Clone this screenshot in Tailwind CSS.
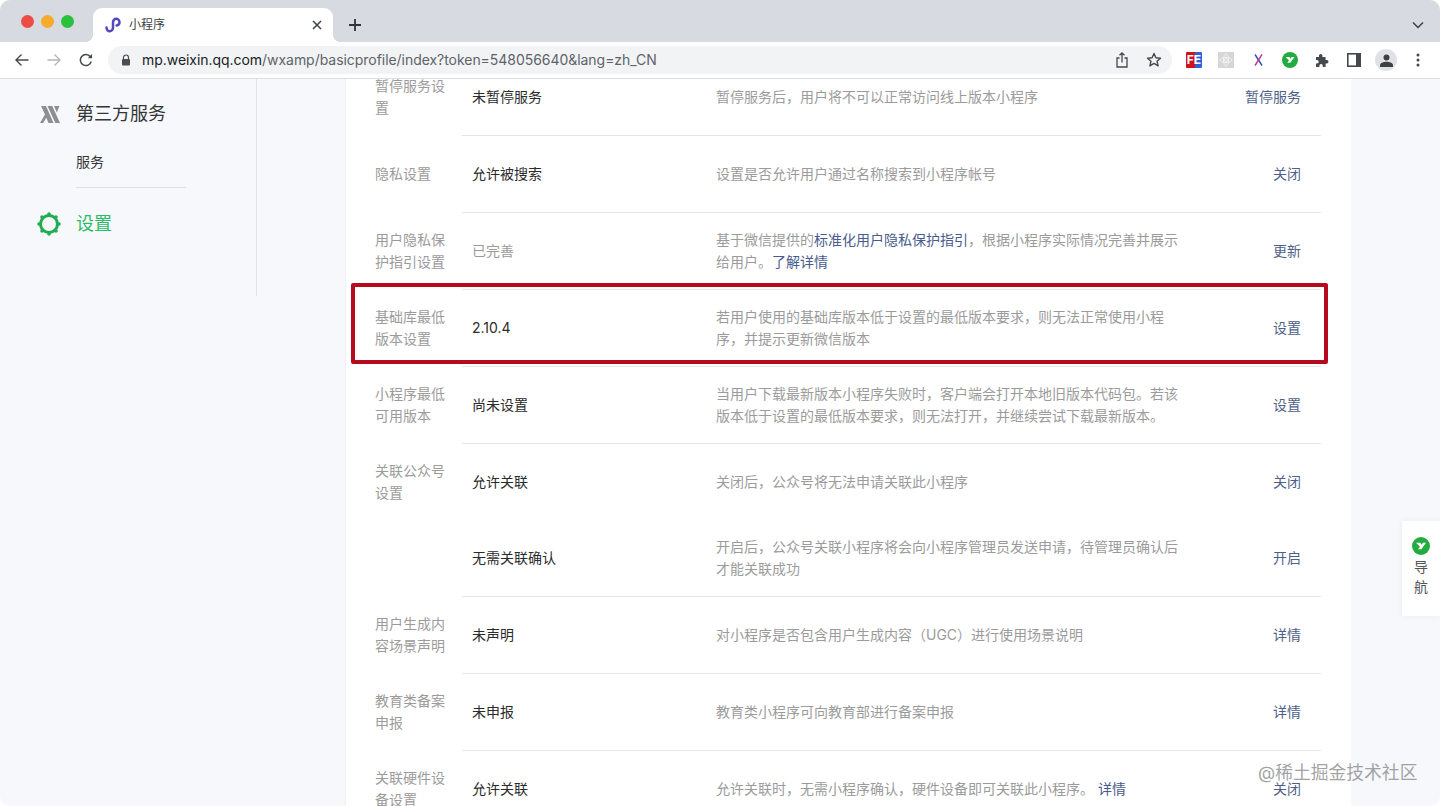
<!DOCTYPE html>
<html lang="zh-CN">
<head>
<meta charset="utf-8">
<title>小程序</title>
<script src="https://cdn.jsdelivr.net/npm/@tailwindcss/browser@4"></script>
</head>
<body class="bg-white">
<div class="relative w-[1440px] h-[806px] overflow-hidden rounded-[10px] flex flex-col bg-[#f6f8fc] font-['Inter','Noto_Sans_CJK_SC',sans-serif]">

  <!-- tab strip -->
  <div class="h-[42px] shrink-0 flex bg-[#d7dae0]">
    <div class="w-[93px] flex items-center gap-[7px] pl-[21px]">
      <span class="w-[13px] h-[13px] rounded-full bg-[#ee4c47]"></span>
      <span class="w-[13px] h-[13px] rounded-full bg-[#f6ab2c]"></span>
      <span class="w-[13px] h-[13px] rounded-full bg-[#2ac13f]"></span>
    </div>
    <div class="relative mt-2 w-[240px] h-[34px] bg-white rounded-t-[9px] flex items-center pl-[12px] pr-[11px]">
      <span class="absolute -left-2 bottom-0 w-2 h-2 bg-[radial-gradient(circle_at_0_0,transparent_8px,white_8px)]"></span>
      <span class="absolute -right-2 bottom-0 w-2 h-2 bg-[radial-gradient(circle_at_100%_0,transparent_8px,white_8px)]"></span>
      <svg class="w-4 h-4 shrink-0" viewBox="0 0 16 16" fill="none" stroke="#5547bd" stroke-width="2.500" stroke-linecap="round"><path d="M1.500 10.500c0 2 1.400 3.800 3.200 3.800S8 12.600 8 10.700V5.300C8 3.400 9.400 1.800 11.200 1.800S14.500 3.400 14.500 5.200c0 1.800-1.300 3-2.900 3.200"/></svg>
      <span class="ml-[8px] text-[12px] text-[#3c4043]">小程序</span>
      <svg class="ml-auto w-[10px] h-[10px]" viewBox="0 0 10 10" stroke="#3c4043" stroke-width="1.500"><path d="M1 1l8 8M9 1l-8 8"/></svg>
    </div>
    <div class="ml-[6px] w-8 flex items-center justify-center pt-[8px]">
      <svg class="w-[14px] h-[14px]" viewBox="0 0 14 14" stroke="#2f3237" stroke-width="1.800"><path d="M7 1v12M1 7h12"/></svg>
    </div>
    <div class="flex-1"></div>
    <div class="w-8 mr-[6px] flex items-center justify-center pt-[8px]">
      <svg class="w-[12px] h-[8px]" viewBox="0 0 12 8" fill="none" stroke="#3c4043" stroke-width="1.500"><path d="M1 1.500l5 5 5-5"/></svg>
    </div>
  </div>

  <!-- toolbar -->
  <div class="h-[37px] shrink-0 bg-white border-b border-[#dcdee2] flex items-center pl-[6px] pr-[6px]">
    <div class="w-8 flex justify-center">
      <svg class="w-[14px] h-[14px]" viewBox="0 0 14 14" fill="none" stroke="#45484d" stroke-width="1.400"><path d="M13.500 7H1M6.500 1.500L1 7l5.500 5.500"/></svg>
    </div>
    <div class="w-8 flex justify-center">
      <svg class="w-[14px] h-[14px]" viewBox="0 0 14 14" fill="none" stroke="#b3b6ba" stroke-width="1.400"><path d="M.5 7H13M7.500 1.500L13 7l-5.500 5.500"/></svg>
    </div>
    <div class="w-8 flex justify-center">
      <svg class="w-[14px] h-[14px]" viewBox="0 0 14 14" fill="none" stroke="#45484d" stroke-width="1.500"><path d="M12.200 8.500a5.500 5.500 0 1 1-.9-4.700"/><path d="M13 1v4.200H8.800z" fill="#45484d" stroke="none"/></svg>
    </div>
    <div class="ml-[6px] w-[1064px] h-[28px] rounded-full bg-[#f1f3f5] flex items-center pl-[13px] pr-[8px]">
      <svg class="w-[10px] h-[12px] shrink-0" viewBox="0 0 10 12"><path d="M2.500 5V3.500a2.500 2.500 0 0 1 5 0V5" fill="none" stroke="#4a4d52" stroke-width="1.200"/><rect x="1" y="5" width="8" height="6.500" rx="1" fill="#4a4d52"/></svg>
      <span class="ml-[11px] text-[14px] tracking-[-0.045px] text-[#5f6368] whitespace-nowrap leading-none"><span class="text-[#202124]">mp.weixin.qq.com</span>/wxamp/basicprofile/index?token=548056640&amp;lang=zh_CN</span>
      <svg class="ml-auto w-[14px] h-[16px]" viewBox="0 0 14 16" fill="none" stroke="#45484d" stroke-width="1.300"><path d="M4.500 6H2v9h10V6H9.500M7 10.500V1M4.500 3.200L7 .9l2.500 2.300"/></svg>
      <svg class="ml-[17px] mr-[2px] w-[16px] h-[16px]" viewBox="0 0 16 16" fill="none" stroke="#45484d" stroke-width="1.400" stroke-linejoin="round"><path d="M8 1.500l1.900 4.300 4.600.4-3.500 3 1.100 4.600L8 11.400l-4.100 2.400L5 9.200l-3.500-3 4.600-.4z"/></svg>
    </div>
    <div class="ml-[6px] w-8 flex justify-center">
      <div class="w-4 h-4 flex items-center justify-center rounded-[1px] bg-[linear-gradient(90deg,#d0121b_55%,#2d63d8_55%)] text-white text-[12px] font-bold leading-none">FE</div>
    </div>
    <div class="w-8 flex justify-center">
      <svg class="w-4 h-4" viewBox="0 0 16 16"><rect width="16" height="16" fill="#d6d6d6"/><g fill="none" stroke="#f2f2f2" stroke-width="1"><ellipse cx="8" cy="8" rx="6" ry="2.500"/><ellipse cx="8" cy="8" rx="2.500" ry="6"/><circle cx="8" cy="8" r="1.500"/></g></svg>
    </div>
    <div class="w-8 flex justify-center">
      <svg class="w-[9px] h-[12px]" viewBox="0 0 9 12" fill="none" stroke-width="1.400"><path d="M1 .5L8 11.500" stroke="#2f4fb5"/><path d="M8 .5L1 11.500" stroke="#c23a8c"/></svg>
    </div>
    <div class="w-8 flex justify-center">
      <svg class="w-4 h-4" viewBox="0 0 16 16"><circle cx="8" cy="8" r="8" fill="#22ab3f"/><path d="M3.600 5h3.800l1.200 1.800L9.700 5h2.800L8.300 10.800H5.200l1.900-2.200z" fill="#fff"/></svg>
    </div>
    <div class="w-8 flex justify-center">
      <svg class="w-[14px] h-[14px]" viewBox="0 0 14 14"><path d="M1 4h3V2.600a1.700 1.700 0 0 1 3.400 0V4h3.200v3h1.200a1.700 1.700 0 0 1 0 3.400h-1.200V14H7.800v-1.200a1.700 1.700 0 0 0-3.400 0V14H1v-3.600h1a1.700 1.700 0 0 0 0-3.400H1z" fill="#45484d"/></svg>
    </div>
    <div class="w-8 flex justify-center">
      <svg class="w-[14px] h-[14px]" viewBox="0 0 14 14"><rect x=".8" y=".8" width="12.400" height="12.400" fill="#fff" stroke="#45484d" stroke-width="1.600"/><rect x="9" y="1" width="4" height="12" fill="#45484d"/></svg>
    </div>
    <div class="w-8 flex justify-center">
      <div class="w-[22px] h-[22px] rounded-full bg-[#dfe1e6] flex items-center justify-center">
        <svg class="w-[13px] h-[13px]" viewBox="0 0 13 13" fill="#3c4043"><circle cx="6.500" cy="3.500" r="3"/><path d="M0 13v-1.800C0 9 3.500 7.800 6.500 7.800S13 9 13 11.200V13z"/></svg>
      </div>
    </div>
    <div class="w-8 flex justify-center">
      <svg class="w-[4px] h-[14px]" viewBox="0 0 4 14" fill="#45484d"><circle cx="2" cy="2" r="1.500"/><circle cx="2" cy="7" r="1.500"/><circle cx="2" cy="12" r="1.500"/></svg>
    </div>
  </div>

  <!-- page -->
  <div class="flex-1 min-h-0 flex items-start overflow-hidden">
    <aside class="w-[257px] h-[217px] shrink-0 border-r border-[#e0e3e9] pt-[24px]">
      <div class="flex items-center h-[22px]">
        <svg class="ml-[40px] w-[20px] h-[17px]" viewBox="0 0 20 17" fill="#8f8f8f"><path d="M0 17L5 8.500 1 0h5l7.500 17H8.500L6.300 11.800 3.200 17zM7.500 0h4.800l7.700 17h-4.700zM14 0h5.500l-2.700 6.500z"/></svg>
        <span class="ml-[16px] text-[18px] text-[#353535] leading-none">第三方服务</span>
      </div>
      <div class="ml-[76px] mt-[26px] w-[110px] h-[37px] border-b border-[#dde0e5] text-[14px] leading-[22px] text-[#353535]">服务</div>
      <div class="flex items-center mt-[23px] h-[26px]">
        <svg class="ml-[37px] w-[24px] h-[24px]" viewBox="0 0 24 24" fill="none" stroke="#22ac52"><circle cx="12" cy="12" r="8.500" stroke-width="3"/><g fill="#22ac52" stroke="none"><circle cx="12" cy="2" r="1.800"/><circle cx="12" cy="22" r="1.800"/><circle cx="2" cy="12" r="1.800"/><circle cx="22" cy="12" r="1.800"/><circle cx="5" cy="5" r="1.800"/><circle cx="19" cy="5" r="1.800"/><circle cx="5" cy="19" r="1.800"/><circle cx="19" cy="19" r="1.800"/></g></svg>
        <span class="ml-[15px] text-[18px] text-[#2dbb67] leading-none">设置</span>
      </div>
    </aside>

    <main class="ml-[88px] w-[1006px] -mt-[20px] bg-white border-l border-[#eef0f5] pl-[29px] pr-[30px] text-[14px] leading-[22px]">
      <div class="flex h-[77px]">
        <div class="w-[87px] pr-[15px] pb-[2px] self-center text-[#9b9b9b]">暂停服务设置</div>
        <div class="flex-1 flex items-center border-b border-[#e6e6e6]">
          <div class="w-[254px] pl-[10px] text-[#2b2b2b]">未暂停服务</div>
          <div class="w-[462px] text-[#9b9b9b]">暂停服务后，用户将不可以正常访问线上版本小程序</div>
          <div class="flex-1 pr-[20px] text-right text-[#4f5f88]">暂停服务</div>
        </div>
      </div>
      <div class="flex h-[77px]">
        <div class="w-[87px] pr-[15px] pb-[2px] self-center text-[#9b9b9b]">隐私设置</div>
        <div class="flex-1 flex items-center border-b border-[#e6e6e6]">
          <div class="w-[254px] pl-[10px] text-[#2b2b2b]">允许被搜索</div>
          <div class="w-[462px] text-[#9b9b9b]">设置是否允许用户通过名称搜索到小程序帐号</div>
          <div class="flex-1 pr-[20px] text-right text-[#4f5f88]">关闭</div>
        </div>
      </div>
      <div class="flex h-[77px]">
        <div class="w-[87px] pr-[15px] pb-[2px] self-center text-[#9b9b9b]">用户隐私保护指引设置</div>
        <div class="flex-1 flex items-center border-b border-[#e6e6e6]">
          <div class="w-[254px] pl-[10px] text-[#9b9b9b]">已完善</div>
          <div class="w-[462px] text-[#9b9b9b]">基于微信提供的<span class="text-[#4a5a8c]">标准化用户隐私保护指引</span>，根据小程序实际情况完善并展示给用户。<span class="text-[#4a5a8c]">了解详情</span></div>
          <div class="flex-1 pr-[20px] text-right text-[#4f5f88]">更新</div>
        </div>
      </div>
      <div class="flex h-[77px]">
        <div class="w-[87px] pr-[15px] pb-[2px] self-center text-[#9b9b9b]">基础库最低版本设置</div>
        <div class="flex-1 flex items-center border-b border-[#e6e6e6]">
          <div class="w-[254px] pl-[10px] text-[#2b2b2b]">2.10.4</div>
          <div class="w-[462px] text-[#9b9b9b]">若用户使用的基础库版本低于设置的最低版本要求，则无法正常使用小程序，并提示更新微信版本</div>
          <div class="flex-1 pr-[20px] text-right text-[#4f5f88]">设置</div>
        </div>
      </div>
      <div class="flex h-[77px]">
        <div class="w-[87px] pr-[15px] pb-[2px] self-center text-[#9b9b9b]">小程序最低可用版本</div>
        <div class="flex-1 flex items-center border-b border-[#e6e6e6]">
          <div class="w-[254px] pl-[10px] text-[#2b2b2b]">尚未设置</div>
          <div class="w-[462px] text-[#9b9b9b]">当用户下载最新版本小程序失败时，客户端会打开本地旧版本代码包。若该版本低于设置的最低版本要求，则无法打开，并继续尝试下载最新版本。</div>
          <div class="flex-1 pr-[20px] text-right text-[#4f5f88]">设置</div>
        </div>
      </div>
      <div class="flex h-[76px]">
        <div class="w-[87px] pr-[15px] self-center text-[#9b9b9b]">关联公众号设置</div>
        <div class="flex-1 flex items-center">
          <div class="w-[254px] pl-[10px] text-[#2b2b2b]">允许关联</div>
          <div class="w-[462px] text-[#9b9b9b]">关闭后，公众号将无法申请关联此小程序</div>
          <div class="flex-1 pr-[20px] text-right text-[#4f5f88]">关闭</div>
        </div>
      </div>
      <div class="flex h-[77px]">
        <div class="w-[87px]"></div>
        <div class="flex-1 flex items-center border-b border-[#e6e6e6]">
          <div class="w-[254px] pl-[10px] text-[#2b2b2b]">无需关联确认</div>
          <div class="w-[462px] text-[#9b9b9b]">开启后，公众号关联小程序将会向小程序管理员发送申请，待管理员确认后才能关联成功</div>
          <div class="flex-1 pr-[20px] text-right text-[#4f5f88]">开启</div>
        </div>
      </div>
      <div class="flex h-[77px]">
        <div class="w-[87px] pr-[15px] pb-[2px] self-center text-[#9b9b9b]">用户生成内容场景声明</div>
        <div class="flex-1 flex items-center border-b border-[#e6e6e6]">
          <div class="w-[254px] pl-[10px] text-[#2b2b2b]">未声明</div>
          <div class="w-[462px] text-[#9b9b9b]">对小程序是否包含用户生成内容（UGC）进行使用场景说明</div>
          <div class="flex-1 pr-[20px] text-right text-[#4f5f88]">详情</div>
        </div>
      </div>
      <div class="flex h-[77px]">
        <div class="w-[87px] pr-[15px] pb-[2px] self-center text-[#9b9b9b]">教育类备案申报</div>
        <div class="flex-1 flex items-center border-b border-[#e6e6e6]">
          <div class="w-[254px] pl-[10px] text-[#2b2b2b]">未申报</div>
          <div class="w-[462px] text-[#9b9b9b]">教育类小程序可向教育部进行备案申报</div>
          <div class="flex-1 pr-[20px] text-right text-[#4f5f88]">详情</div>
        </div>
      </div>
      <div class="flex h-[77px]">
        <div class="w-[87px] pr-[15px] pb-[2px] self-center text-[#9b9b9b]">关联硬件设备设置</div>
        <div class="flex-1 flex items-center border-b border-[#e6e6e6]">
          <div class="w-[254px] pl-[10px] text-[#2b2b2b]">允许关联</div>
          <div class="w-[462px] text-[#9b9b9b]">允许关联时，无需小程序确认，硬件设备即可关联此小程序。 <span class="text-[#4a5a8c]">详情</span></div>
          <div class="flex-1 pr-[20px] text-right text-[#4f5f88]">关闭</div>
        </div>
      </div>
    </main>
  </div>

  <!-- annotation box -->
  <div class="absolute left-[351px] top-[283px] w-[977px] h-[81px] border-[4px] border-[#b80a1e] rounded-[2px]"></div>

  <!-- floating nav -->
  <div class="absolute right-0 top-[521px] w-[38px] h-[95px] bg-white shadow-[0_0_8px_rgba(0,0,0,0.05)] flex flex-col items-center pt-[16px] text-[14px] leading-[20px] text-[#555]">
    <svg class="w-[18px] h-[18px] mb-[2px]" viewBox="0 0 16 16"><circle cx="8" cy="8" r="8" fill="#22ab3f"/><path d="M3.600 5h3.800l1.200 1.800L9.700 5h2.800L8.300 10.800H5.200l1.900-2.200z" fill="#fff"/></svg>
    <span>导</span>
    <span>航</span>
  </div>

  <!-- watermark -->
  <div class="absolute left-[1258px] top-[762px] text-[17.800px] leading-[22px] text-[#8a8a8a]/80 whitespace-nowrap">@稀土掘金技术社区</div>
</div>
</body>
</html>
